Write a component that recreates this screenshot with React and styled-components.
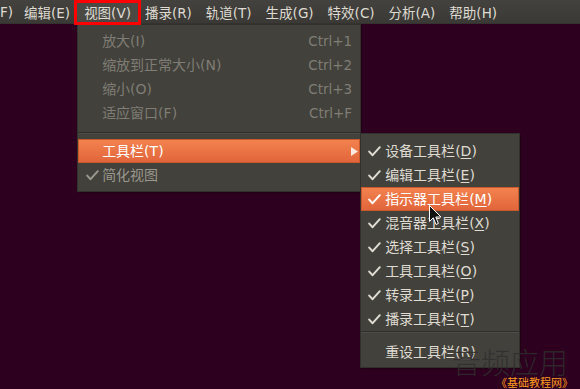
import React from "react";
import styled, { createGlobalStyle } from "styled-components";

const Global = createGlobalStyle`
  html, body { margin: 0; padding: 0; background: #2c001e; }
  body { font-family: "DejaVu Sans", "Noto Sans CJK SC", sans-serif; }
  * { box-sizing: border-box; }
`;

const Screen = styled.div`
  position: relative;
  width: 580px;
  height: 389px;
  background: #2c001e;
  overflow: hidden;
  font-family: "DejaVu Sans", "Noto Sans CJK SC", sans-serif;
`;

const MenuBar = styled.div`
  display: flex;
  align-items: stretch;
  height: 24px;
  background: linear-gradient(#43423e, #3a3935);
  border-bottom: 1px solid #33322e;
`;

const BarItem = styled.div`
  position: relative;
  display: flex;
  align-items: center;
  padding: 0 ${(p) => p.$padR ?? 7}px 0 ${(p) => p.$padL ?? 7}px;
  font-size: 13.5px;
  color: #dfdbd2;
  white-space: nowrap;
  background: ${(p) => (p.$active ? "#4a4944" : "transparent")};
`;

const RedBox = styled.span`
  position: absolute;
  left: -3px;
  right: -3px;
  top: 0;
  height: 25px;
  border: 3px solid #ff0000;
  pointer-events: none;
  z-index: 5;
`;

const Menu = styled.div`
  position: absolute;
  display: flex;
  flex-direction: column;
  background: #42413b;
  border: 1px solid #32312d;
  box-shadow: 1px 1px 0 rgba(0, 0, 0, 0.25);
  z-index: 3;
`;

const MainMenu = styled(Menu)`
  left: 0;
  top: 24px;
  width: 284px;
  padding: 4px 0 4px;
`;

const SubMenu = styled(Menu)`
  left: 100%;
  top: -6px;
  width: 160px;
  padding: 5px 0 3px;
`;

const Item = styled.div`
  position: relative;
  display: flex;
  align-items: center;
  height: 24px;
  padding: 0 ${(p) => p.$right ?? 8}px 0 ${(p) => p.$left ?? 24}px;
  font-size: 14px;
  white-space: nowrap;
  color: ${(p) =>
    p.$hot ? "#ffffff" : p.$dim ? "#7f7d75" : p.$muted ? "#9a978e" : "#dfdbd2"};
  background: ${(p) =>
    p.$hot ? "linear-gradient(#f3834f, #e1643a)" : "transparent"};
  box-shadow: ${(p) => (p.$hot ? "inset 0 0 0 1px #c9582d" : "none")};
`;

const Label = styled.span`
  flex: 1;
  line-height: 24px;
`;

const Key = styled.span`
  text-decoration: ${(p) => (p.$u ? "underline" : "none")};
  text-underline-offset: 2px;
`;

const Shortcut = styled.span`
  color: #7f7d75;
  font-size: 13.5px;
`;

const CheckSlot = styled.span`
  position: absolute;
  left: ${(p) => p.$x ?? 7}px;
  top: 7px;
  width: 13px;
  height: 11px;
  display: flex;
`;

const Separator = styled.div`
  margin: ${(p) => p.$top ?? 4}px 0 ${(p) => p.$bottom ?? 3}px;
  height: 2px;
  border-top: 1px solid #2f2e2a;
  border-bottom: 1px solid #4d4c46;
`;

const Arrow = styled.span`
  position: absolute;
  right: 2px;
  top: 8px;
  display: flex;
`;

const Cursor = styled.span`
  position: absolute;
  left: 429px;
  top: 205px;
  display: flex;
  z-index: 10;
`;

const Watermark = styled.div`
  position: absolute;
  right: 12px;
  bottom: 13px;
  font-family: "Noto Sans CJK SC", sans-serif;
  font-weight: 300;
  font-size: 29px;
  color: rgba(48, 46, 46, 0.85);
  z-index: 8;
  line-height: 1;
`;

const SiteMark = styled.div`
  position: absolute;
  right: 7px;
  bottom: 1px;
  font-family: "Noto Sans CJK SC", sans-serif;
  font-size: 11px;
  color: #ff9a1e;
  z-index: 9;
  line-height: 1;
`;

const Check = ({ color = "#dfdbd2" }) => (
  <svg width="13" height="11" viewBox="0 0 13 11">
    <path
      d="M1.2 5.6 L4.6 9.2 L11.8 1.2"
      fill="none"
      stroke={color}
      strokeWidth="2"
      strokeLinecap="round"
      strokeLinejoin="round"
    />
  </svg>
);

const bar = [
  ["F)", null],
  ["编辑(E)", null],
  ["视图(V)", "active"],
  ["播录(R)", null],
  ["轨道(T)", null],
  ["生成(G)", null],
  ["特效(C)", null],
  ["分析(A)", null],
  ["帮助(H)", null],
];

const zoomItems = [
  ["放大(I)", "Ctrl+1"],
  ["缩放到正常大小(N)", "Ctrl+2"],
  ["缩小(O)", "Ctrl+3"],
  ["适应窗口(F)", "Ctrl+F"],
];

const toolbars = [
  ["设备工具栏", "D"],
  ["编辑工具栏", "E"],
  ["指示器工具栏", "M", true],
  ["混音器工具栏", "X"],
  ["选择工具栏", "S"],
  ["工具工具栏", "O"],
  ["转录工具栏", "P"],
  ["播录工具栏", "T"],
];

function SubMenuPanel() {
  return (
    <SubMenu>
      {toolbars.map(([name, key, hot]) => (
        <Item key={name} $hot={hot}>
          <CheckSlot $x={7}>
            <Check color={hot ? "#ffffff" : "#dfdbd2"} />
          </CheckSlot>
          <Label>
            {name}(<Key $u>{key}</Key>)
          </Label>
        </Item>
      ))}
      <Separator $top={0} $bottom={7} />
      <Item>
        <Label>
          重设工具栏(<Key $u>R</Key>)
        </Label>
      </Item>
    </SubMenu>
  );
}

function ViewMenu() {
  return (
    <MainMenu>
      {zoomItems.map(([label, sc]) => (
        <Item key={label} $dim>
          <Label>{label}</Label>
          <Shortcut>{sc}</Shortcut>
        </Item>
      ))}
      <Separator $top={7} $bottom={5} />
      <Item $hot>
        <Label>工具栏(T)</Label>
        <Arrow>
          <svg width="7" height="9" viewBox="0 0 7 9">
            <polygon points="0,0 7,4.5 0,9" fill="#fbe9df" />
          </svg>
        </Arrow>
        <SubMenuPanel />
      </Item>
      <Item $muted>
        <CheckSlot $x={8}>
          <Check color="#9a978e" />
        </CheckSlot>
        <Label>简化视图</Label>
      </Item>
    </MainMenu>
  );
}

export default function App() {
  return (
    <>
      <Global />
      <Screen>
        <MenuBar>
          {bar.map(([label, state], i) => (
            <BarItem
              key={label}
              $active={state === "active"}
              $padL={i === 0 ? 0 : 7}
              $padR={i === 0 ? 4 : 7}
            >
              {label}
              {state === "active" && (
                <>
                  <RedBox />
                  <ViewMenu />
                </>
              )}
            </BarItem>
          ))}
        </MenuBar>
        <Cursor>
          <svg width="13" height="21" viewBox="0 0 13 21">
            <path
              d="M0.5 0.5 L0.5 16.5 L4.3 12.8 L7 19.5 L9.4 18.5 L6.8 12 L12 12 Z"
              fill="#111"
              stroke="#fff"
              strokeWidth="1"
              strokeLinejoin="round"
            />
          </svg>
        </Cursor>
        <Watermark>音频应用</Watermark>
        <SiteMark>《基础教程网》</SiteMark>
      </Screen>
    </>
  );
}
